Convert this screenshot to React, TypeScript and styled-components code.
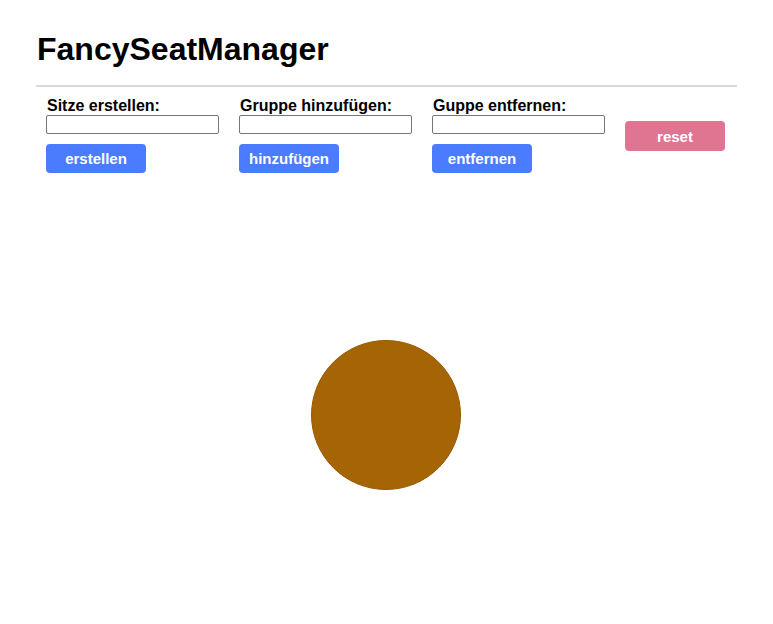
import * as React from 'react';
import styled, { createGlobalStyle } from 'styled-components';

const GlobalStyle = createGlobalStyle`
    body {
        margin: 0;
        background: #ffffff;
        font-family: "Liberation Sans", Arial, sans-serif;
        color: #000000;
    }
`;

interface FormColumn {
    label: string;
    action: string;
}

const COLUMNS: FormColumn[] = [
    { label: 'Sitze erstellen:', action: 'erstellen' },
    { label: 'Gruppe hinzufügen:', action: 'hinzufügen' },
    { label: 'Guppe entfernen:', action: 'entfernen' },
];

const App: React.FC = () => {
    const [values, setValues] = React.useState<string[]>(['', '', '']);

    const onChange = React.useCallback((index: number, value: string) => {
        setValues((prev) => prev.map((v, i) => (i === index ? value : v)));
    }, []);

    const onReset = React.useCallback(() => {
        setValues(['', '', '']);
    }, []);

    return (
        <Root>
            <GlobalStyle />
            <Header>
                <Title>FancySeatManager</Title>
            </Header>
            <Controls>
                {COLUMNS.map((column, index) => (
                    <Column key={column.action}>
                        <Label>
                            {column.label}
                            <TextInput
                                type="text"
                                value={values[index]}
                                onChange={(e) => onChange(index, e.target.value)}
                            />
                        </Label>
                        <ActionButton $variant="primary">{column.action}</ActionButton>
                    </Column>
                ))}
                <ResetColumn>
                    <ActionButton $variant="danger" onClick={onReset}>
                        reset
                    </ActionButton>
                </ResetColumn>
            </Controls>
            <Stage>
                <Seat />
            </Stage>
        </Root>
    );
};

const Root = styled.div`
    width: 701px;
    margin: 0 auto;
    padding-top: 31px;
`;

const Header = styled.header`
    padding-bottom: 17px;
    border-bottom: 2px solid #d3dbdf;
`;

const Title = styled.h1`
    margin: 0;
    padding-left: 1px;
    font-size: 32px;
    line-height: 37px;
    font-weight: 700;
`;

const Controls = styled.div`
    display: flex;
    align-items: center;
    gap: 20px;
    padding: 10px 10px 0;
`;

const Column = styled.div`
    display: flex;
    flex-direction: column;
    align-items: flex-start;
    width: 173px;
`;

const ResetColumn = styled.div`
    display: flex;
    align-items: center;
    padding-top: 2px;
`;

const Label = styled.label`
    display: flex;
    flex-direction: column;
    font-size: 16px;
    line-height: 18px;
    font-weight: 700;
    padding-left: 1px;
`;

const TextInput = styled.input`
    box-sizing: border-box;
    width: 173px;
    height: 19px;
    margin: 0 0 0 -1px;
    padding: 1px 2px;
    border: 1px solid #767676;
    border-radius: 2px;
    font-family: "Liberation Sans", Arial, sans-serif;
    font-size: 13px;
`;

const ActionButton = styled.button<{ $variant: 'primary' | 'danger' }>`
    width: 100px;
    height: ${(p) => (p.$variant === 'danger' ? '30px' : '29px')};
    margin-top: ${(p) => (p.$variant === 'danger' ? '0' : '10px')};
    border: none;
    border-radius: 4px;
    background: ${(p) => (p.$variant === 'danger' ? '#e07592' : '#4b7bff')};
    color: #ffffff;
    font-family: "Liberation Sans", Arial, sans-serif;
    font-size: 15px;
    font-weight: 700;
    cursor: pointer;
`;

const Stage = styled.div`
    display: flex;
    justify-content: center;
    padding-top: 167px;
    padding-right: 1px;
`;

const Seat = styled.div`
    box-sizing: border-box;
    width: 150px;
    height: 150px;
    border-radius: 50%;
    background: #a66505;
    border: 1px solid #965a00;
`;

export default App;
